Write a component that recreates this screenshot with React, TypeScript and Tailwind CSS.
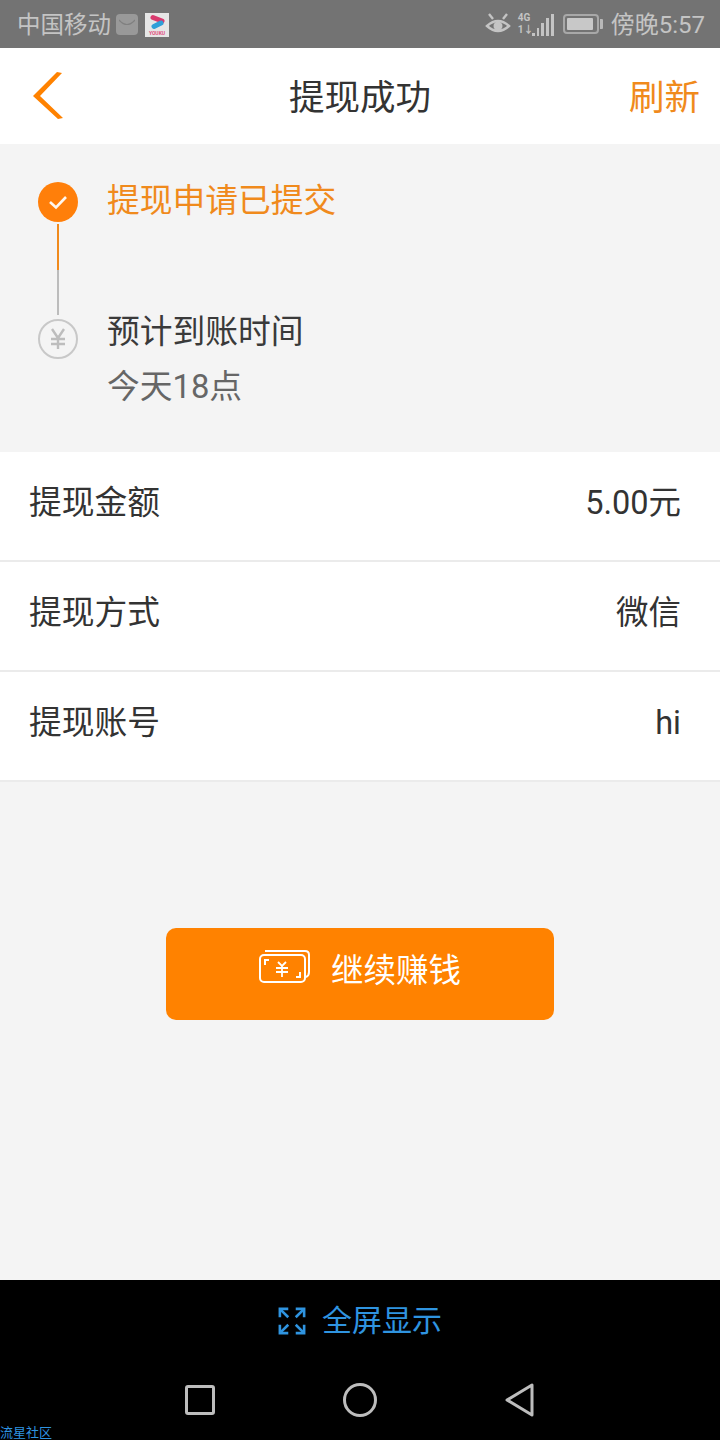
import { ReactNode } from "react";

const FONT = "font-['Roboto','Noto_Sans_CJK_SC',sans-serif]";

function YoukuIcon() {
  return (
    <div className="flex h-[24px] w-[24px] flex-col items-center bg-[#e6e6e6]">
      <svg width="24" height="17" viewBox="0 0 24 17" fill="none" strokeWidth="5" strokeLinecap="round">
        <path d="M8 4.500 L17 8" stroke="#d93a6e" />
        <path d="M16 10 L9 13.500" stroke="#2f9fd8" />
      </svg>
      <span className="text-[5px] leading-[6px] font-bold text-[#e0507f]">YOUKU</span>
    </div>
  );
}

function StatusRight() {
  return (
    <div className="flex items-center">
      {/* eye */}
      <svg width="26" height="24" viewBox="0 0 26 24" fill="none" stroke="#c4c4c4" strokeWidth="2.400">
        <path d="M2 14 Q13 4 24 14 Q13 24 2 14Z" />
        <circle cx="13" cy="14" r="4.500" fill="#c4c4c4" stroke="none" />
        <path d="M4 2 L8 7 M22 2 L18 7" />
      </svg>
      <div className="ml-[7px] flex h-[24px] w-[36px] items-end gap-[2px]">
        <div className="flex w-[12px] flex-col text-[10px] leading-[12px] font-bold text-[#c4c4c4]">
          <span>4G</span>
          <span>1↓</span>
        </div>
        <div className="h-[3px] w-[3px] bg-[#c4c4c4]" />
        <div className="h-[8px] w-[3px] bg-[#c4c4c4]" />
        <div className="h-[13px] w-[3px] bg-[#c4c4c4]" />
        <div className="h-[18px] w-[3px] bg-[#c4c4c4]" />
        <div className="h-[22px] w-[3px] bg-[#c4c4c4]" />
      </div>
      {/* battery */}
      <div className="ml-[9px] flex items-center">
        <div className="h-[20px] w-[36px] rounded-[4px] border-2 border-[#a8a8a8] p-[2px]">
          <div className="h-full w-[26px] rounded-[1px] bg-[#c8c8c8]" />
        </div>
        <div className="ml-[1px] h-[10px] w-[3px] rounded-r-[1px] bg-[#b8b8b8]" />
      </div>
      <span className="mt-[2px] ml-[8px] text-[24px] leading-none text-[#c4c4c4]">傍晚5:57</span>
    </div>
  );
}

function StatusBar() {
  return (
    <div className="flex h-[48px] items-center justify-between bg-[#737373] pr-[15px] pl-[17px]">
      <div className="flex items-center">
        <span className="mt-[4px] text-[23.500px] leading-none text-[#c4c4c4]">中国移动</span>
        <div className="ml-[5px] flex h-[21px] w-[22px] items-center justify-center rounded-[4px] bg-[#999]">
          <svg width="16" height="10" viewBox="0 0 16 10" fill="none" stroke="#808080" strokeWidth="1.200">
            <path d="M0 1 Q8 10 16 1" />
          </svg>
        </div>
        <div className="mt-[2px] ml-[7px]">
          <YoukuIcon />
        </div>
      </div>
      <StatusRight />
    </div>
  );
}

function Header() {
  return (
    <div className="grid h-[96px] grid-cols-3 items-center bg-white px-[20px]">
      <svg className="ml-[13px]" width="31" height="48" viewBox="0 0 31 48" fill="#ff8200">
        <polygon points="29,1 24,0 0,24 25,47 30,46 7,24" />
      </svg>
      <span className="mt-[5px] justify-self-center text-[35.500px] leading-none whitespace-nowrap text-[#333]">提现成功</span>
      <span className="mt-[5px] justify-self-end text-[35.500px] leading-none text-[#f08a1c]">刷新</span>
    </div>
  );
}

function Steps() {
  return (
    <div className="flex h-[308px] bg-[#f4f4f4] pt-[38px] pl-[38px]">
      <div className="flex w-[40px] flex-col items-center">
        <div className="flex h-[40px] w-[40px] items-center justify-center rounded-full bg-[#ff7f0a]">
          <svg width="20" height="16" viewBox="0 0 20 16" fill="none" stroke="#fff7ee" strokeWidth="2.600">
            <path d="M2 8 L8 13.500 L18 3" />
          </svg>
        </div>
        <div className="mt-[2px] h-[46px] w-[2px] bg-[#f08a1c]" />
        <div className="h-[45px] w-[2px] bg-[#bcbcbc]" />
        <div className="mt-[4px] flex h-[40px] w-[40px] items-center justify-center rounded-full border-2 border-[#c8c8c8]">
          <svg width="18" height="22" viewBox="0 0 18 22" fill="none" stroke="#bdbdbd" strokeWidth="2.400">
            <path d="M3 1 L9 10 L15 1 M9 10 V21 M2 11 H16 M2 16 H16" />
          </svg>
        </div>
      </div>
      <div className="ml-[29px] flex flex-col">
        <span className="mt-[-1px] text-[32.750px] leading-[40px] text-[#f08a1c]">提现申请已提交</span>
        <span className="mt-[91px] text-[32.750px] leading-[40px] text-[#3a3a3a]">预计到账时间</span>
        <span className="mt-[15px] text-[32.750px] leading-[40px] text-[#666]">今天18点</span>
      </div>
    </div>
  );
}

function Row({ label, children }: { label: string; children: ReactNode }) {
  return (
    <div className="flex h-[110px] items-center justify-between border-b-2 border-[#ebebeb] bg-white pr-[39px] pb-[6px] pl-[29px]">
      <span className="text-[32.750px] leading-none text-[#333]">{label}</span>
      <span className="text-[32.500px] leading-none text-[#333]">{children}</span>
    </div>
  );
}

function MoneyIcon() {
  return (
    <svg width="52" height="34" viewBox="0 0 52 34" fill="none" stroke="#fff" strokeWidth="2">
      <rect x="1" y="5" width="45" height="27" rx="4" />
      <path d="M6 1 H46 Q50 1 50 5 V22 Q50 26 47 27" />
      <path d="M6 15 V10 H10 M41 22 V27 H37" />
      <path d="M19 12 L23 16 L27 12 M17 18 H29 M17 22 H29 M23 16 V27" strokeWidth="1.800" />
    </svg>
  );
}

function ExpandIcon() {
  return (
    <svg width="28" height="28" viewBox="0 0 30 30" fill="none" stroke="#2f94e0" strokeWidth="2.800">
      <path d="M2 11 V2 H11 M19 2 H28 V11 M28 19 V28 H19 M11 28 H2 V19" />
      <path d="M3 3 L11 11 M27 3 L19 11 M27 27 L19 19 M3 27 L11 19" />
    </svg>
  );
}

function BottomBar() {
  return (
    <div className="relative h-[160px] bg-black">
      <div className="flex h-[82px] items-center justify-center">
        <ExpandIcon />
        <span className="ml-[16px] text-[30px] leading-none text-[#2f94e0]">全屏显示</span>
      </div>
      <div className="flex h-[40px] items-center justify-center gap-[128px] pt-[36px]">
        <div className="h-[30px] w-[30px] rounded-[3px] border-[3px] border-[#bdbdbd]" />
        <div className="h-[34px] w-[34px] rounded-full border-[3px] border-[#bdbdbd]" />
        <svg width="30" height="34" viewBox="0 0 30 34" fill="none" stroke="#bdbdbd" strokeWidth="3" strokeLinejoin="round">
          <path d="M27 2 V32 L2 17Z" />
        </svg>
      </div>
      <span className="absolute bottom-[0px] left-0 text-[13px] leading-[14px] text-[#2f94e0]">流星社区</span>
    </div>
  );
}

export default function App() {
  return (
    <div className={`flex h-[1440px] w-[720px] flex-col overflow-hidden bg-[#f4f4f4] ${FONT}`}>
      <StatusBar />
      <Header />
      <Steps />
      <Row label="提现金额">5.00元</Row>
      <Row label="提现方式">微信</Row>
      <Row label="提现账号">hi</Row>
      <div className="flex flex-1 justify-center pt-[146px]">
        <button className="flex h-[92px] w-[388px] items-center justify-center rounded-[10px] bg-[#ff8200] text-[32.500px] text-white">
          <span className="mt-[-14px]">
            <MoneyIcon />
          </span>
          <span className="mt-[-6px] ml-[20px] leading-none">继续赚钱</span>
        </button>
      </div>
      <BottomBar />
    </div>
  );
}
